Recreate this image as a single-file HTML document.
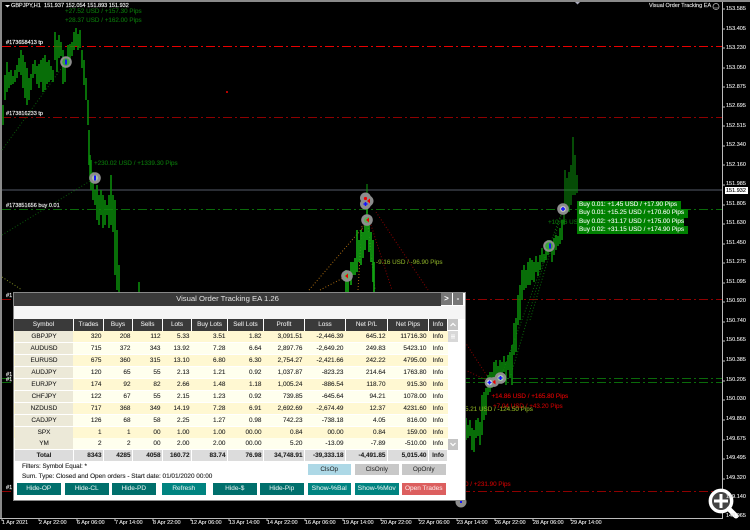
<!DOCTYPE html>
<html><head><meta charset="utf-8">
<style>
html,body{margin:0;padding:0;background:#000}
#r{position:relative;width:750px;height:530px;overflow:hidden;background:#000;font-family:"Liberation Sans",sans-serif;filter:blur(.2px)}
svg{position:absolute;left:0;top:0}
.t{position:absolute;font-size:6.3px;line-height:8px;white-space:nowrap;color:#ddd;-webkit-text-stroke:.12px currentColor}
.l{font-size:5.55px;color:#f2f2f2;-webkit-text-stroke:.15px currentColor}
.a{position:absolute;left:726px;font-size:5.5px;line-height:8px;color:#e2e2e2;white-space:nowrap;-webkit-text-stroke:.12px currentColor}
.d{position:absolute;top:519px;font-size:5.4px;line-height:8px;color:#e2e2e2;white-space:nowrap;-webkit-text-stroke:.12px currentColor}
.g{color:#0b720b}
.b{position:absolute;left:577px;background:#008000;color:#eef8ee;font-size:6.3px;line-height:8.4px;height:8.6px;padding-left:2px;white-space:nowrap;box-sizing:border-box;-webkit-text-stroke:.1px currentColor}
#p{position:absolute;left:14px;top:293px;width:451px;height:207px;background:#fff;box-shadow:0 0 0 1px #888}
#tb{position:absolute;left:0;top:0;width:427px;height:13px;background:#3a3a3a;color:#e4e4e4;font-size:7.7px;line-height:12px;text-align:center}
.ic{position:absolute;top:0;height:12px;background:#777;color:#fff;text-align:center;font-size:8px;line-height:11px;font-weight:bold}
#st{position:absolute;left:0;top:13px;width:451px;height:13px;background:#f5f5f5}
.row{position:absolute;left:0;height:11px;display:flex;font-size:6.4px;line-height:11px;color:#1c1c1c;-webkit-text-stroke:.08px currentColor}
.row span{display:block;height:100%;margin-right:1px;text-align:right;padding-right:1.5px;box-sizing:border-box;white-space:nowrap;background:inherit}
.row span:nth-child(1){width:58px;margin-left:1px;text-align:center;background:#ece9d8;padding:0}
.row span:nth-child(2){width:29px}.row span:nth-child(3){width:28px}.row span:nth-child(4){width:29px}.row span:nth-child(5){width:28px}.row span:nth-child(6){width:35px}.row span:nth-child(7){width:35px}.row span:nth-child(8){width:40px}.row span:nth-child(9){width:40px}.row span:nth-child(10){width:41px}.row span:nth-child(11){width:40px}.row span:nth-child(12){width:18px;text-align:center;padding:0}
.o{background:#fff8d2}.e{background:#ffffee}
.hd{color:#e4e4e4}
.hd span,.hd span:nth-child(1){background:#3a3a3a;color:#e4e4e4;text-align:center;padding:0}
.hd span:nth-child(1){margin-left:0;width:59px}
.tot{font-weight:bold;background:#dcdcdc;color:#222}
.tot span:nth-child(1){background:#dcdcdc}
.bt{position:absolute;top:190px;height:11.5px;width:43.5px;background:#006f6c;color:#d6e8e7;text-align:center;font-size:6.5px;line-height:11px;white-space:nowrap;-webkit-text-stroke:.08px currentColor}
.bs{position:absolute;top:171px;height:11px;width:43.5px;background:#c8c8c8;color:#222;text-align:center;font-size:6.4px;line-height:11px}
.sb{position:absolute;left:433.5px;width:10px;background:#c4c4c4;color:#fff;overflow:hidden}
</style></head><body>
<div id="r">
<svg width="750" height="530" viewBox="0 0 750 530">
<rect x="0" y="0" width="750" height="2" fill="#8a8a8a"/>
<rect x="0" y="0" width="2" height="518" fill="#8a8a8a"/>
<rect x="722" y="2" width="1" height="516" fill="#bbb"/>
<rect x="0" y="518" width="723" height="1" fill="#bbb"/>
<g stroke="#bbb" stroke-width="1"><path d="M722 9h3M722 29h3M722 48h3M722 68h3M722 87h3M722 107h3M722 126h3M722 146h3M722 165h3M722 185h3M722 205h3M722 224h3M722 244h3M722 263h3M722 283h3M722 302h3M722 322h3M722 341h3M722 361h3M722 381h3M722 400h3M722 420h3M722 440h3M722 459h3M722 479h3M722 498h3"/>
<path d="M2 519v2M39 519v2M77 519v2M115 519v2M153 519v2M191 519v2M229 519v2M267 519v2M305 519v2M343 519v2M381 519v2M419 519v2M457 519v2M495 519v2M533 519v2M571 519v2"/></g>
<rect x="2" y="189.5" width="720" height="1" fill="#545a68"/>
<g fill="none" stroke-width="1">
<path d="M2 46.5H722" stroke="#e80000" stroke-dasharray="9 3 2 3"/>
<path d="M2 117.5H722" stroke="#8e0000" stroke-dasharray="9 3 2 3"/>
<path d="M2 209.5H722" stroke="#0a6a0a" stroke-dasharray="9 3 2 3"/>
<path d="M2 378.5H722" stroke="#0a6a0a" stroke-dasharray="9 3 2 3"/>
<path d="M2 382.5H722" stroke="#0a6a0a" stroke-dasharray="9 3 2 3"/>
<path d="M2 299.5H722" stroke="#8e0000" stroke-dasharray="9 3 2 3"/>
<path d="M2 491.5H722" stroke="#8e0000" stroke-dasharray="9 3 2 3"/>
</g>
<g fill="none" stroke-width="1" stroke-dasharray="1 2">
<path d="M2 150L66 62M2 235L95 178" stroke="#0a5a0a"/>
<path d="M2 277L22 290" stroke="#7d8a20"/>
<path d="M309 290L365 225M320 290L347 276M358 290L362 225" stroke="#a86a10"/>
<path d="M370 222L392 290M376 212L428 290M465 342L491 382M465 370L491 382" stroke="#8a0000"/>
<path d="M368 225L375 290" stroke="#7d9a20"/>
<path d="M500 379L563 209M510 378L549 246M530 320L563 209" stroke="#0a6a0a"/>
</g>
<circle cx="227" cy="92" r="1" fill="#e00"/>
<path fill="none" stroke="#0a8a0a" stroke-width="1.600" d="M3 105V125M5 75V100M7 62V92M9 72V88M11 70V85M13 76V84M15 70V82M17 65V78M19 58V72M21 50V75M23 55V88M25 62V98M27 68V105M29 78V100M31 74V90M33 64V78M35 60V74M37 66V84M39 64V88M41 60V82M43 58V92M45 55V90M47 62V84M49 60V82M51 66V80M53 70V82M55 32V60M57 40V72M59 35V58M61 42V56M63 50V84M65 60V82M68 45V64M70 44V62M72 42V56M74 32V50M76 28V46M78 34V50M80 30V48M82 50V68M84 60V85M86 78V100M88 100V125M89 130V165M90 155V180M91 160V190M93 172V200M95 190V205M97 185V220M99 195V225M101 190V215M103 195V228M105 200V225M107 205V215M109 195V228M111 175V225M113 195V232M115 200V275M117 230V290M119 265V293M139 282V293"/>
<path fill="none" stroke="#12a012" stroke-width="1.700" d="M346 270V293M348 275V293M351 262V285M353 262V275M355 258V275M357 230V272M359 240V262M361 230V265M363 232V258M365 215V250M367 205V240M369 225V252M371 232V262M373 240V282M374 262V292"/>
<path fill="none" stroke="#0f9a0f" stroke-width="1" d="M367 184V210"/>
<path fill="none" stroke="#0a8a0a" stroke-width="1.600" d="M466 418V440M468 425V438M470 420V436M472 428V450M474 430V452M476 420V438M478 418V436M480 422V445M482 395V435M484 392V420M486 388V415M488 375V395M490 372V392M492 372V388M494 362V382M496 360V378M498 366V380M500 360V376M502 362V378M504 356V372M506 362V385M508 355V370M510 352V378M512 345V385M514 323V355M516 318V352M518 295V325M520 285V320M522 270V300M524 265V290M526 270V288M528 262V285M530 258V285M532 260V280M534 262V282M536 256V272M538 262V276M540 255V270M542 248V262M544 254V262M546 245V260M548 240V255M550 240V252M552 245V262M554 238V255M556 235V250M558 236V246M560 228V244M562 220V240"/>
<path fill="none" stroke="#0a8a0a" stroke-width="1.100" d="M564 205V225M565 170V210M567 178V205M569 172V212M571 165V205M573 137V195M575 155V195M577 175V193"/>
<g>
<g><circle cx="66" cy="62" r="5.800" fill="#8d8d8d"/><circle cx="66" cy="62" r="3.800" fill="#3aa83a"/><rect x="65" y="59.500" width="2" height="5" fill="#11f"/></g>
<g><circle cx="95" cy="178" r="5.800" fill="#8d8d8d"/><circle cx="95" cy="178" r="3" fill="#a8c0a8"/><rect x="94" y="175.500" width="2" height="5" fill="#11f"/></g>
<g><circle cx="347" cy="276" r="5.800" fill="#8d8d8d"/><circle cx="347" cy="276" r="3" fill="#6ab06a"/><path d="M345 276l3-2.500v5z" fill="#e00"/></g>
<g><circle cx="365.500" cy="198" r="5.500" fill="#8d8d8d"/><circle cx="368" cy="201" r="5.500" fill="#8d8d8d"/><circle cx="365.500" cy="204" r="5.500" fill="#8d8d8d"/><circle cx="365.500" cy="198.500" r="1.600" fill="#e00"/><path d="M367 201l3-2.500v5z" fill="#e00"/><path d="M363.500 204h4M365.500 202v4" stroke="#11f" stroke-width="1.500"/></g>
<g><circle cx="367" cy="220" r="5.800" fill="#8d8d8d"/><circle cx="367" cy="220" r="3" fill="#5ab05a"/><path d="M366 220l3-2.500v5z" fill="#e00"/></g>
<g><circle cx="549" cy="246" r="5.800" fill="#8d8d8d"/><circle cx="549" cy="246" r="3.800" fill="#3aa83a"/><rect x="549" y="243.500" width="2" height="5" fill="#11f"/></g>
<g><circle cx="563" cy="209" r="5.800" fill="#8d8d8d"/><circle cx="563" cy="209" r="3" fill="#c0c0c0"/><path d="M561 209h4M563 207v4" stroke="#11f" stroke-width="1.500"/></g>
<g><circle cx="490" cy="382.500" r="5.300" fill="#8d8d8d"/><circle cx="494" cy="382" r="5" fill="#8d8d8d"/><circle cx="489.500" cy="382.500" r="2.800" fill="#d8e8d8"/><path d="M487.500 382.500h4M489.500 380.500v4" stroke="#11f" stroke-width="1.500"/><path d="M492.500 382l3-2.500v5z" fill="#e00"/></g>
<g><circle cx="500.500" cy="378" r="5.800" fill="#8d8d8d"/><circle cx="500.500" cy="378" r="3" fill="#a8d0a8"/><path d="M498.500 378h4M500.500 376v4" stroke="#11f" stroke-width="1.500"/></g>
<g><circle cx="461" cy="502" r="5.500" fill="#8d8d8d"/><rect x="460" y="500" width="2" height="3" fill="#11f"/></g>
</g>
<path d="M5 5h5l-2.500 2.500z" fill="#eee"/>
<path d="M575 2h5l-2.500 2.500z" fill="#aab"/>
<circle cx="716" cy="6.500" r="3" fill="none" stroke="#bbb" stroke-width=".8"/>
<path d="M714.500 7.500q1.500 1.300 3 0" fill="none" stroke="#bbb" stroke-width=".6"/>
<rect x="725" y="187" width="23" height="7" fill="#fff"/>
<g fill="none" stroke="#fff">
<circle cx="721" cy="501" r="10.700" stroke-width="3.400" fill="#444"/>
<path d="M729 509L736 516" stroke-width="5" stroke-linecap="round"/>
<path d="M714 501h14M721 494v14" stroke-width="3"/>
</g>
</svg>

<div class="t l" style="left:11px;top:2px">GBPJPY,H1</div>
<div class="t l" style="left:44px;top:2px">151.937 152.054 151.893 151.932</div>
<div class="t l" style="left:649px;top:2px;color:#ddd">Visual Order Tracking EA</div>
<div class="t g" style="left:65px;top:8px">+27.52 USD / +157.30 Pips</div>
<div class="t g" style="left:65px;top:17px">+28.37 USD / +162.00 Pips</div>
<div class="t g" style="left:94px;top:160px">+230.02 USD / +1339.30 Pips</div>
<div class="t l" style="left:6px;top:39px;color:#fff">#173658413 tp</div>
<div class="t l" style="left:6px;top:110px">#173816233 tp</div>
<div class="t l" style="left:6px;top:202px">#173851656 buy 0.01</div>
<div class="t l" style="left:6px;top:292px">#1</div>
<div class="t l" style="left:6px;top:371px">#1</div>
<div class="t l" style="left:6px;top:376px">#1</div>
<div class="t l" style="left:6px;top:484px">#1</div>
<div class="t" style="left:376px;top:259px;color:#7f9f25">-9.16 USD / -96.90 Pips</div>
<div class="t g" style="left:548px;top:219px">+10.06 US</div>
<div class="t" style="left:491.500px;top:393px;color:#e00000">+14.86 USD / +165.80 Pips</div>
<div class="t" style="left:493px;top:403px;color:#c00000">+7.04 USD / +43.20 Pips</div>
<div class="t" style="left:465px;top:406px;color:#86a822">5.21 USD / -124.50 Pips</div>
<div class="t" style="left:465px;top:481px;color:#c00000">0 / +231.90 Pips</div>

<div class="b" style="top:200.500px;width:104px">Buy 0.01: +1.45 USD / +17.90 Pips</div>
<div class="b" style="top:209px;width:111px">Buy 0.01: +15.25 USD / +170.60 Pips</div>
<div class="b" style="top:217.500px;width:107px">Buy 0.02: +31.17 USD / +175.00 Pips</div>
<div class="b" style="top:226px;width:111px;height:7.500px">Buy 0.02: +31.15 USD / +174.90 Pips</div>

<div class="a" style="top:5px">153.585</div><div class="a" style="top:25px">153.405</div><div class="a" style="top:44px">153.230</div><div class="a" style="top:64px">153.050</div><div class="a" style="top:83px">152.875</div><div class="a" style="top:102px">152.695</div><div class="a" style="top:122px">152.515</div><div class="a" style="top:141px">152.340</div><div class="a" style="top:161px">152.160</div><div class="a" style="top:180px">151.985</div>
<div class="a" style="top:186.500px;color:#000">151.932</div>
<div class="a" style="top:200px">151.805</div><div class="a" style="top:219px">151.630</div><div class="a" style="top:239px">151.450</div><div class="a" style="top:258px">151.275</div><div class="a" style="top:278px">151.095</div><div class="a" style="top:297px">150.920</div><div class="a" style="top:317px">150.740</div><div class="a" style="top:336px">150.565</div><div class="a" style="top:356px">150.385</div><div class="a" style="top:376px">150.205</div><div class="a" style="top:395px">150.030</div><div class="a" style="top:415px">149.850</div><div class="a" style="top:435px">149.675</div><div class="a" style="top:454px">149.495</div><div class="a" style="top:474px">149.320</div><div class="a" style="top:493px">149.140</div><div class="a" style="top:512px">148.965</div>

<div class="d" style="left:2px">1 Apr 2021</div><div class="d" style="left:39px">2 Apr 22:00</div><div class="d" style="left:77px">6 Apr 06:00</div><div class="d" style="left:115px">7 Apr 14:00</div><div class="d" style="left:153px">8 Apr 22:00</div><div class="d" style="left:191px">12 Apr 06:00</div><div class="d" style="left:229px">13 Apr 14:00</div><div class="d" style="left:267px">14 Apr 22:00</div><div class="d" style="left:305px">16 Apr 06:00</div><div class="d" style="left:343px">19 Apr 14:00</div><div class="d" style="left:381px">20 Apr 22:00</div><div class="d" style="left:419px">22 Apr 06:00</div><div class="d" style="left:457px">23 Apr 14:00</div><div class="d" style="left:495px">26 Apr 22:00</div><div class="d" style="left:533px">28 Apr 06:00</div><div class="d" style="left:571px">29 Apr 14:00</div>

<div id="p">
<div id="tb">Visual Order Tracking EA 1.26</div>
<div class="ic" style="left:427px;width:11px">&gt;</div>
<div class="ic" style="left:439px;width:10px">-</div>
<div id="st"></div>
<div class="row hd" style="top:26px;height:11.500px"><span>Symbol</span><span>Trades</span><span>Buys</span><span>Sells</span><span>Lots</span><span>Buy Lots</span><span>Sell Lots</span><span>Profit</span><span>Loss</span><span>Net P/L</span><span>Net Pips</span><span>Info</span></div>
<div class="row o" style="top:38px"><span>GBPJPY</span><span>320</span><span>208</span><span>112</span><span>5.33</span><span>3.51</span><span>1.82</span><span>3,091.51</span><span>-2,446.39</span><span>645.12</span><span>11716.30</span><span>Info</span></div>
<div class="row e" style="top:50px"><span>AUDUSD</span><span>715</span><span>372</span><span>343</span><span>13.92</span><span>7.28</span><span>6.64</span><span>2,897.76</span><span>-2,649.20</span><span>249.83</span><span>5423.10</span><span>Info</span></div>
<div class="row o" style="top:62px"><span>EURUSD</span><span>675</span><span>360</span><span>315</span><span>13.10</span><span>6.80</span><span>6.30</span><span>2,754.27</span><span>-2,421.66</span><span>242.22</span><span>4795.00</span><span>Info</span></div>
<div class="row e" style="top:74px"><span>AUDJPY</span><span>120</span><span>65</span><span>55</span><span>2.13</span><span>1.21</span><span>0.92</span><span>1,037.87</span><span>-823.23</span><span>214.64</span><span>1763.80</span><span>Info</span></div>
<div class="row o" style="top:86px"><span>EURJPY</span><span>174</span><span>92</span><span>82</span><span>2.66</span><span>1.48</span><span>1.18</span><span>1,005.24</span><span>-886.54</span><span>118.70</span><span>915.30</span><span>Info</span></div>
<div class="row e" style="top:98px"><span>CHFJPY</span><span>122</span><span>67</span><span>55</span><span>2.15</span><span>1.23</span><span>0.92</span><span>739.85</span><span>-645.64</span><span>94.21</span><span>1078.00</span><span>Info</span></div>
<div class="row o" style="top:110px"><span>NZDUSD</span><span>717</span><span>368</span><span>349</span><span>14.19</span><span>7.28</span><span>6.91</span><span>2,692.69</span><span>-2,674.49</span><span>12.37</span><span>4231.60</span><span>Info</span></div>
<div class="row e" style="top:122px"><span>CADJPY</span><span>126</span><span>68</span><span>58</span><span>2.25</span><span>1.27</span><span>0.98</span><span>742.23</span><span>-738.18</span><span>4.05</span><span>816.00</span><span>Info</span></div>
<div class="row o" style="top:133.500px"><span>SPX</span><span>1</span><span>1</span><span>00</span><span>1.00</span><span>1.00</span><span>00.00</span><span>0.84</span><span>00.00</span><span>0.84</span><span>159.00</span><span>Info</span></div>
<div class="row e" style="top:145px"><span>YM</span><span>2</span><span>2</span><span>00</span><span>2.00</span><span>2.00</span><span>00.00</span><span>5.20</span><span>-13.09</span><span>-7.89</span><span>-510.00</span><span>Info</span></div>
<div class="row tot" style="top:156.500px;height:11.500px;background:#fff"><span>Total</span><span style="background:#dcdcdc">8343</span><span style="background:#dcdcdc">4285</span><span style="background:#dcdcdc">4058</span><span style="background:#dcdcdc">160.72</span><span style="background:#dcdcdc">83.74</span><span style="background:#dcdcdc">76.98</span><span style="background:#dcdcdc">34,748.91</span><span style="background:#dcdcdc">-39,333.18</span><span style="background:#dcdcdc">-4,491.85</span><span style="background:#dcdcdc">5,015.40</span><span style="background:#dcdcdc">Info</span></div>
<div class="sb" style="top:26px;height:11px"><svg width="10" height="11"><path d="M2.500 7L5 4.500L7.500 7" fill="none" stroke="#fff" stroke-width="1.200"/></svg></div>
<div class="sb" style="top:38px;height:11px;background:#d8d8d8"><svg width="10" height="11"><path d="M3 4h4M3 5.500h4M3 7h4" stroke="#fff" stroke-width=".7"/></svg></div>
<div class="sb" style="top:146px;height:11px"><svg width="10" height="11"><path d="M2.500 4L5 6.500L7.500 4" fill="none" stroke="#fff" stroke-width="1.200"/></svg></div>
<div class="t" style="left:8px;top:170px;color:#222;font-size:6.250px">Filters: Symbol Equal: *</div>
<div class="t" style="left:8px;top:180px;color:#222;font-size:6.400px">Sum. Type: Closed and Open orders - Start date: 01/01/2020 00:00</div>
<div class="bs" style="left:293.500px;background:#add8e6">ClsOp</div>
<div class="bs" style="left:341px">ClsOnly</div>
<div class="bs" style="left:388px">OpOnly</div>
<div class="bt" style="left:3px">Hide-OP</div>
<div class="bt" style="left:51px">Hide-CL</div>
<div class="bt" style="left:98px">Hide-PD</div>
<div class="bt" style="left:148px;background:#008380">Refresh</div>
<div class="bt" style="left:199px">Hide-$</div>
<div class="bt" style="left:246px">Hide-Pip</div>
<div class="bt" style="left:293.500px;background:#008380;font-size:6.800px">Show-%Bal</div>
<div class="bt" style="left:341px;background:#008380;font-size:6.800px">Show-%Mov</div>
<div class="bt" style="left:388px;background:#dc5f5f;color:#f8e0e0">Open Trades</div>
</div>
</div>
</body></html>
